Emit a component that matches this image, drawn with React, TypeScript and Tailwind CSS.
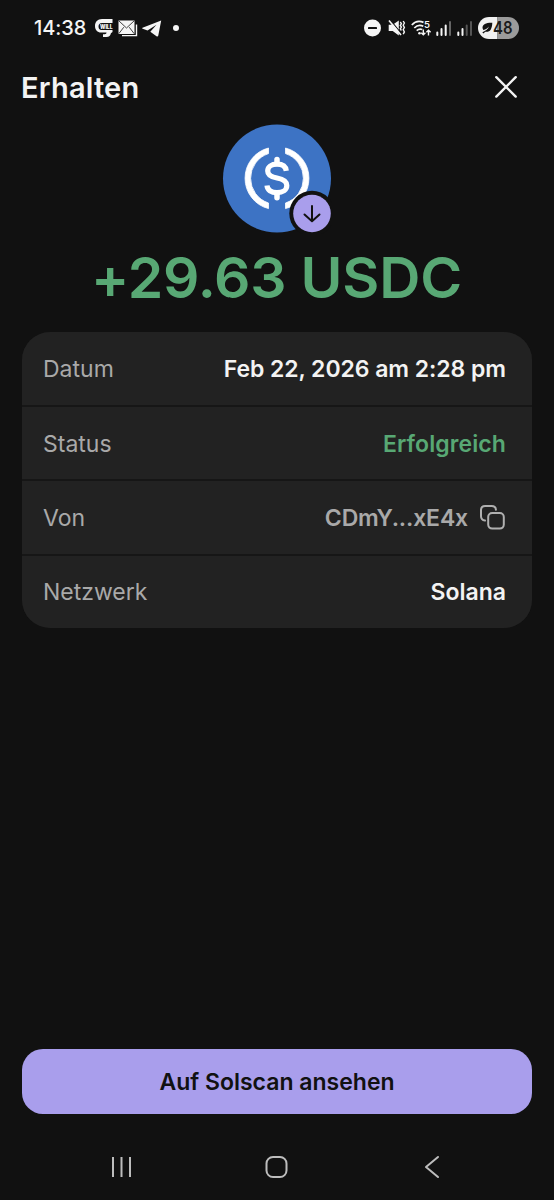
import type { ReactNode } from "react";

function StatusBar() {
  return (
    <div className="flex h-14 items-center justify-between pr-[35px] pl-[34px] text-[#f5f5f5]">
      <div className="flex items-center">
        <span className="w-[52px] text-[20px] leading-6 font-medium tracking-[-0.1px] whitespace-nowrap">14:38</span>
        <svg className="ml-[8px]" width="20" height="20" viewBox="0 0 20 20">
          <path d="M18.500 1H8C3.500 1 1 4 1 8s2.500 6.500 6 6.500h5.500c0 1.300-.6 1.700-1.800 1.700H9V19h3.300c3 0 4.200-1.500 4.600-3.700l1.600-1.400V12H7.500C5.500 12 4.500 10.500 4.500 8.500S5.600 5 8 5h10.500z" fill="currentColor" />
          <text x="6" y="10.700" fontSize="5.600" fontWeight="900" textLength="12.500" lengthAdjust="spacingAndGlyphs" fill="currentColor" fontFamily="Inter, sans-serif">WILL</text>
        </svg>
        <svg className="ml-[4px]" width="20" height="17" viewBox="0 0 20 17">
          <path d="M4 15.600h14.500V4.500" fill="none" stroke="currentColor" strokeWidth="1.400" />
          <rect x=".5" y=".5" width="16" height="13.500" fill="currentColor" />
          <path d="M.8.800l7.700 7.200L16.200.800M.8 13.700l5-6.500M16.200 13.700l-5-6.500" fill="none" stroke="#111" strokeWidth=".8" />
        </svg>
        <svg className="ml-[4px]" width="20" height="17" viewBox="0 0 20 17">
          <path d="M19.200.4L.5 7.700q-.8.500.2 1l4.800 1.800L14.500 4.800l-6.200 6.900 6.200 4.500q1.400.7 1.800-.8L19.200.4z" fill="currentColor" />
        </svg>
        <span className="ml-[11px] size-[6px] rounded-full bg-[#f5f5f5]" />
      </div>
      <div className="flex items-center">
        <svg width="18" height="18" viewBox="0 0 18 18">
          <circle cx="8.500" cy="9" r="8.500" fill="currentColor" />
          <rect x="4" y="8" width="9" height="2" rx=".6" fill="#111" />
        </svg>
        <svg className="ml-[6px]" width="18" height="18" viewBox="0 0 18 18">
          <path d="M.7 5.800h4L10.800 1.500v15L4.700 12h-4z" fill="currentColor" />
          <path d="M2.200.8l11.800 14.500" stroke="#111" strokeWidth="1.200" />
          <path d="M1 1.500l12 14.500" stroke="currentColor" strokeWidth="1.600" />
          <path d="M12.300 3l1.100 1.700-1.100 1.700 1.100 1.700-1.100 1.700 1.100 1.700M15.200 2l1.200 2-1.200 2.200 1.200 2.200-1.200 2.300 1.200 2.200-1.200 2.200" fill="none" stroke="currentColor" strokeWidth="1.400" />
        </svg>
        <svg className="ml-[5px]" width="22" height="18" viewBox="0 0 22 18">
          <g fill="none" stroke="currentColor" strokeWidth="1.700">
            <path d="M.8 6C4 2.400 8.500 1.700 12.500 3.400" />
            <path d="M3.300 9c2.600-2.700 6-3.200 9-1.700" />
            <path d="M5.700 11.600c1.700-1.600 3.700-1.900 5.600-1" />
            <path d="M12.300 10.500v5M10.200 13.700l2.100 2.100 2.100-2.100M17.500 16.500v-5M15.400 13.300l2.100-2.100 2.100 2.100" strokeWidth="1.400" />
          </g>
          <circle cx="8.500" cy="14.300" r="1.300" fill="currentColor" />
          <text x="13" y="9" fontSize="9.500" fontWeight="600" fill="currentColor" fontFamily="Inter, sans-serif">5</text>
        </svg>
        <svg className="ml-[3px]" width="16" height="16" viewBox="0 0 16 16">
          <path d="M1.300 15v-2.500M5.500 15V9M9.700 15V5.500" stroke="currentColor" strokeWidth="2" strokeLinecap="round" />
          <path d="M14 15V2" stroke="#666" strokeWidth="2" strokeLinecap="round" />
        </svg>
        <svg className="ml-[5px]" width="16" height="16" viewBox="0 0 16 16">
          <path d="M1.300 15v-2.500M5.500 15V9" stroke="currentColor" strokeWidth="2" strokeLinecap="round" />
          <path d="M9.700 15V5.500M14 15V2" stroke="#555" strokeWidth="2" strokeLinecap="round" />
        </svg>
        <svg className="ml-[5px]" width="41" height="22" viewBox="0 0 41 22">
          <path d="M19.500 0H11a11 11 0 0 0 0 22h8.500z" fill="#f1f1f1" />
          <path d="M19.500 0H30a11 11 0 0 1 0 22H19.500z" fill="#9b9b9b" />
          <path d="M14.300 5.700C8 5.500 4.700 7.300 4.500 10.500q0 1.500.9 2.400c2.400-.5 4-1.500 5.500-3.500-.8 2.500-2.800 4.300-6.500 5.800l.9 1.200 2.100-1.700c4 .9 6.700-2 6.900-9z" fill="#111" />
          <text x="15" y="17.300" fontSize="17.500" fontWeight="600" textLength="19.500" lengthAdjust="spacingAndGlyphs" fill="#1b1b1b" fontFamily="Inter, sans-serif">48</text>
        </svg>
      </div>
    </div>
  );
}

function TokenLogo() {
  return (
    <div className="mx-auto mt-[6px] size-[110px]">
      <svg width="110" height="110" viewBox="0 0 110 110">
        <circle cx="55" cy="54.500" r="54" fill="#3d73c4" />
        <path d="M46.500 24v5.600a26 26 0 0 0 0 49.400v5.600a31.300 31.300 0 0 1 0-60.600zM63.500 24v5.600a26 26 0 0 1 0 49.400v5.600a31.300 31.300 0 0 0 0-60.600z" fill="#fff" stroke="#fff" strokeWidth=".8" strokeLinejoin="round" />
        <path d="M64.300 46.900c-.5-4.300-4-6.700-9.300-6.700-5.600 0-9.300 2.700-9.300 6.800 0 4.300 3.500 6 9.300 7 6.200 1.100 9.800 2.900 9.800 7.500 0 4.300-4 7.200-9.800 7.200s-9.600-2.700-10-7.200" fill="none" stroke="#fff" strokeWidth="5.200" />
        <path d="M55 35.500v4M55 69.500v4.300" stroke="#fff" strokeWidth="5.500" strokeLinecap="round" />
        <circle cx="90" cy="89.500" r="22.700" fill="#111" />
        <circle cx="90" cy="89.500" r="18.800" fill="#a99eec" />
        <path d="M90 82v14.800M82.500 90.500l7.500 6.800 7.500-6.800" fill="none" stroke="#111" strokeWidth="2" strokeLinecap="round" strokeLinejoin="round" />
      </svg>
    </div>
  );
}

function CopyIcon() {
  return (
    <svg width="26" height="26" viewBox="0 0 26 26" fill="none" stroke="#b0b0b0" strokeWidth="2" strokeLinecap="round">
      <rect x="8.200" y="8" width="15.600" height="15.600" rx="4" />
      <path d="M5 15.600C2.500 15.200 1 13.800 1 11.300V5.200C1 2.500 2.500 1 5.200 1h6.400c2.700 0 4.200 1.400 4.300 3.700" />
    </svg>
  );
}

function Row({ label, children }: { label: string; children: ReactNode }) {
  return (
    <div className="flex items-center justify-between bg-[#222] pt-[2px] pr-[26px] pl-[21px] text-[23px] last:pt-0">
      <span className="text-[#a9a9a9]">{label}</span>
      {children}
    </div>
  );
}

export default function App() {
  return (
    <main className="flex h-[1200px] w-[554px] flex-col bg-[#111] font-['Inter',sans-serif] text-[#f3f3f3]">
      <StatusBar />
      <header className="flex h-[62px] items-center justify-between pr-[36px] pl-[21px]">
        <h1 className="pt-[2px] text-[29px] leading-9 font-semibold tracking-[0.2px]">Erhalten</h1>
        <svg width="24" height="24" viewBox="0 0 24 24" fill="none" stroke="currentColor" strokeWidth="2.400" strokeLinecap="round">
          <path d="M2.300 2.200l19.400 19.400M21.700 2.200L2.300 21.600" />
        </svg>
      </header>
      <TokenLogo />
      <div className="mt-[8px] h-[72px] pr-px text-center text-[57px] leading-[72px] font-semibold tracking-[-0.2px] whitespace-nowrap text-[#58a874]">+29.63 USDC</div>
      <section className="mx-[22px] mt-[18px] grid h-[296px] grid-rows-4 gap-[2px] overflow-hidden rounded-[28px] bg-[#161616]">
        <Row label="Datum"><span className="font-semibold tracking-[-0.05px]">Feb 22, 2026 am 2:28 pm</span></Row>
        <Row label="Status"><span className="font-semibold tracking-[0.1px] text-[#58a874]">Erfolgreich</span></Row>
        <Row label="Von">
          <span className="flex items-center gap-3 font-semibold tracking-[-0.15px] text-[#a9a9a9]">CDmY...xE4x<CopyIcon /></span>
        </Row>
        <Row label="Netzwerk"><span className="font-semibold">Solana</span></Row>
      </section>
      <button className="mx-[22px] mt-auto h-[65px] shrink-0 rounded-[21px] bg-[#a99eec] pt-[2px] text-[23px] font-semibold text-[#111]">Auf Solscan ansehen</button>
      <nav className="mt-[20px] flex h-[66px] shrink-0 items-center justify-between px-[110px] text-[#bdbdbd]">
        <svg width="24" height="24" viewBox="0 0 24 24" fill="none" stroke="currentColor" strokeWidth="2"><path d="M3 2v20M11.500 2v20M20 2v20" /></svg>
        <svg width="24" height="24" viewBox="0 0 24 24" fill="none" stroke="currentColor" strokeWidth="2"><rect x="1.500" y="2" width="20" height="20" rx="6.500" /></svg>
        <svg width="24" height="24" viewBox="0 0 24 24" fill="none" stroke="currentColor" strokeWidth="2" strokeLinecap="round" strokeLinejoin="round"><path d="M18 2L6 12l12 10" /></svg>
      </nav>
    </main>
  );
}
